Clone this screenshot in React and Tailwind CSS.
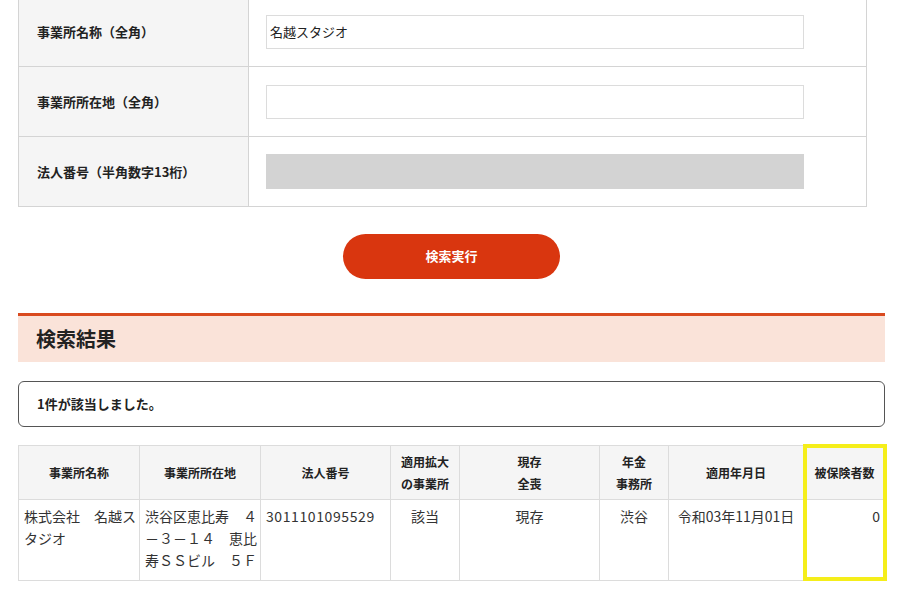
import React from "react";

const FormRow = ({ label, children, last }) => (
  <tr className={last ? "" : "border-b border-[#d4d4d4]"}>
    <th className="w-[230px] h-[70px] bg-[#f5f5f5] border-r border-[#d4d4d4] text-left font-bold text-[13px] text-[#222] pl-[18px]">
      {label}
    </th>
    <td className="pl-[17px]">{children}</td>
  </tr>
);

const headers = [
  { w: "w-[121px]", label: "事業所名称" },
  { w: "w-[121px]", label: "事業所所在地" },
  { w: "w-[130px]", label: "法人番号" },
  { w: "w-[69px]", label: ["適用拡大", "の事業所"] },
  { w: "w-[140px]", label: ["現存", "全喪"] },
  { w: "w-[69px]", label: ["年金", "事務所"] },
  { w: "w-[135px]", label: "適用年月日" },
  { w: "w-[82px]", label: "被保険者数" },
];

export default function App() {
  return (
    <div
      className="w-[900px] h-[597px] overflow-hidden bg-white text-[#222]"
      style={{ fontFamily: '"Noto Sans CJK JP", "Noto Sans", sans-serif' }}
    >
      <div className="ml-[18px] w-[867px]">
        {/* search form */}
        <table className="-mt-[4px] w-[849px] border border-[#d4d4d4] border-collapse">
          <tbody>
            <FormRow label="事業所名称（全角）">
              <input
                defaultValue="名越スタジオ"
                className="w-[538px] h-[34px] border border-[#dcdcdc] px-[3px] text-[13px] text-[#222] outline-none"
              />
            </FormRow>
            <FormRow label="事業所所在地（全角）">
              <input className="w-[538px] h-[34px] border border-[#dcdcdc] px-[3px] text-[13px] outline-none" />
            </FormRow>
            <FormRow label="法人番号（半角数字13桁）" last>
              <div className="w-[538px] h-[35px] bg-[#d3d3d3]" />
            </FormRow>
          </tbody>
        </table>

        <div className="flex justify-center mt-[27px]">
          <button className="w-[217px] h-[45px] rounded-full bg-[#d9360f] text-white font-bold text-[13px] pb-[2px]">
            検索実行
          </button>
        </div>

        {/* results heading */}
        <div className="mt-[34px] border-t-[3px] border-[#d94a1f] bg-[#fae3d9] h-[49px] flex items-center pl-[18px]">
          <h2 className="text-[20px] font-bold text-[#222]">検索結果</h2>
        </div>

        <div className="mt-[19px] h-[46px] border border-[#555] rounded-[6px] flex items-center pl-[18px]">
          <p className="text-[13px] font-bold">1件が該当しました。</p>
        </div>

        {/* results table */}
        <div className="relative mt-[18px]">
          <table className="w-[867px] border-collapse border border-[#dcdcdc] table-fixed">
            <thead>
              <tr className="h-[54px] bg-[#f5f5f5]">
                {headers.map((h, i) => (
                  <th
                    key={i}
                    className={`${h.w} border border-[#dcdcdc] text-center font-bold text-[12px] leading-[22px] text-[#222]`}
                  >
                    {Array.isArray(h.label) ? (
                      <>
                        {h.label[0]}
                        <br />
                        {h.label[1]}
                      </>
                    ) : (
                      h.label
                    )}
                  </th>
                ))}
              </tr>
            </thead>
            <tbody>
              <tr className="h-[81px] align-top text-[14px] leading-[22px] text-[#333]">
                <td className="border border-[#dcdcdc] pl-[5px] pt-[5px] whitespace-nowrap">
                  株式会社　名越ス
                  <br />
                  タジオ
                </td>
                <td className="border border-[#dcdcdc] pl-[5px] pt-[5px] whitespace-nowrap">
                  渋谷区恵比寿　４
                  <br />
                  －３－１４　恵比
                  <br />
                  寿ＳＳビル　５Ｆ
                </td>
                <td className="border border-[#dcdcdc] pl-[5px] pt-[5px] tracking-[0.6px]">3011101095529</td>
                <td className="border border-[#dcdcdc] pt-[5px] text-center">該当</td>
                <td className="border border-[#dcdcdc] pt-[5px] text-center">現存</td>
                <td className="border border-[#dcdcdc] pt-[5px] text-center">渋谷</td>
                <td className="border border-[#dcdcdc] pt-[5px] text-center whitespace-nowrap">令和03年11月01日</td>
                <td className="border border-[#dcdcdc] pt-[5px] pr-[5px] text-right">0</td>
              </tr>
            </tbody>
          </table>
          {/* highlight over the last column */}
          <div className="absolute left-[785px] -top-[1px] w-[84px] h-[137px] border-[4px] border-[#f5ee1a] pointer-events-none" />
        </div>
      </div>
    </div>
  );
}
